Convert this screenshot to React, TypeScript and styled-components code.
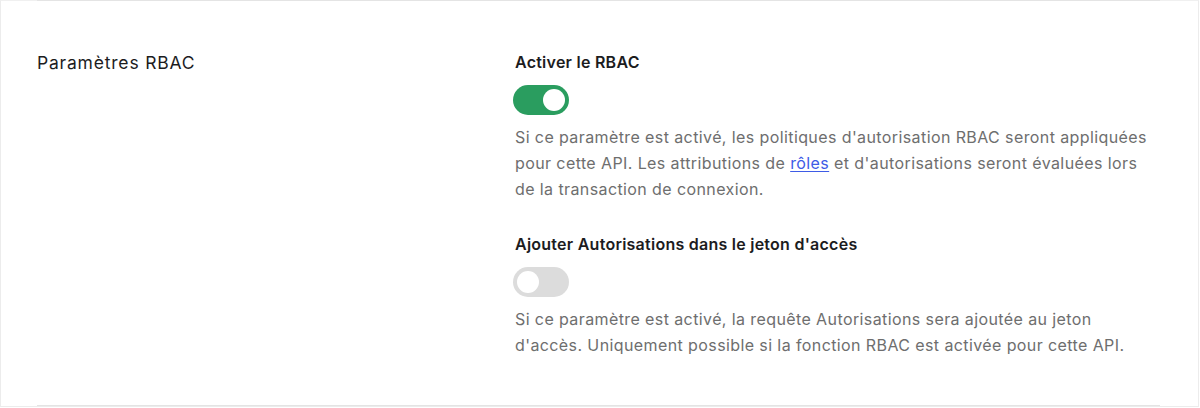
import React from "react";
import styled, { createGlobalStyle } from "styled-components";

const GlobalStyle = createGlobalStyle`
  html, body { margin: 0; padding: 0; background: #ffffff; }
  body { font-family: Inter, "Noto Sans", "Liberation Sans", sans-serif; -webkit-font-smoothing: antialiased; }
  * { box-sizing: border-box; }
`;

const Card = styled.div`
  width: 1199px;
  height: 407px;
  border: 1px solid #ececec;
  border-top-color: #f0f0f0;
  background: #ffffff;
`;

const Section = styled.section`
  margin: -1px 38px 0 36px;
  height: 406px;
  border-top: 1px solid #e4e4e4;
  border-bottom: 1px solid #e4e4e4;
  padding: 49px 0 0 0;
  display: grid;
  grid-template-columns: 478px 1fr;
`;

const Heading = styled.h2`
  margin: 0;
  font-size: 17.5px;
  line-height: 26px;
  font-weight: 400;
  letter-spacing: 0.8px;
  color: #1c1c1e;
`;

const Settings = styled.div`
  display: flex;
  flex-direction: column;
  gap: 30px;
`;

const Setting = styled.div`
  display: flex;
  flex-direction: column;
  align-items: flex-start;
`;

const Label = styled.div`
  font-size: 16px;
  line-height: 24px;
  font-weight: 600;
  letter-spacing: 0.25px;
  color: #1c1c1e;
`;

const Switch = styled.button<{ $on: boolean }>`
  margin: 11px 0 0 -2px;
  width: 56px;
  height: 30px;
  padding: 4px;
  border: none;
  border-radius: 15px;
  background: ${(p) => (p.$on ? "#2a9d5f" : "#dcdcdc")};
  display: flex;
  justify-content: ${(p) => (p.$on ? "flex-end" : "flex-start")};
  align-items: center;
  cursor: pointer;
`;

const Knob = styled.span`
  width: 22px;
  height: 22px;
  border-radius: 50%;
  background: #ffffff;
`;

const Description = styled.p`
  margin: 9px 0 0 0;
  white-space: nowrap;
  font-size: 16px;
  line-height: 26px;
  font-weight: 400;
  letter-spacing: 0.4px;
  color: #6e6e6e;
`;

const Link = styled.a`
  color: #3e5be6;
  text-decoration: underline;
  text-underline-offset: 2px;
`;

export default function App() {
  return (
    <>
      <GlobalStyle />
      <Card>
        <Section>
          <Heading>Paramètres RBAC</Heading>
          <Settings>
            <Setting>
              <Label>Activer le RBAC</Label>
              <Switch $on={true} aria-pressed="true">
                <Knob />
              </Switch>
              <Description>
                Si ce paramètre est activé, les politiques d'autorisation RBAC seront appliquées
                <br />
                pour cette API. Les attributions de <Link href="#">rôles</Link> et d'autorisations
                seront évaluées lors
                <br />
                de la transaction de connexion.
              </Description>
            </Setting>
            <Setting>
              <Label>Ajouter Autorisations dans le jeton d'accès</Label>
              <Switch $on={false} aria-pressed="false">
                <Knob />
              </Switch>
              <Description>
                Si ce paramètre est activé, la requête Autorisations sera ajoutée au jeton
                <br />
                d'accès. Uniquement possible si la fonction RBAC est activée pour cette API.
              </Description>
            </Setting>
          </Settings>
        </Section>
      </Card>
    </>
  );
}
